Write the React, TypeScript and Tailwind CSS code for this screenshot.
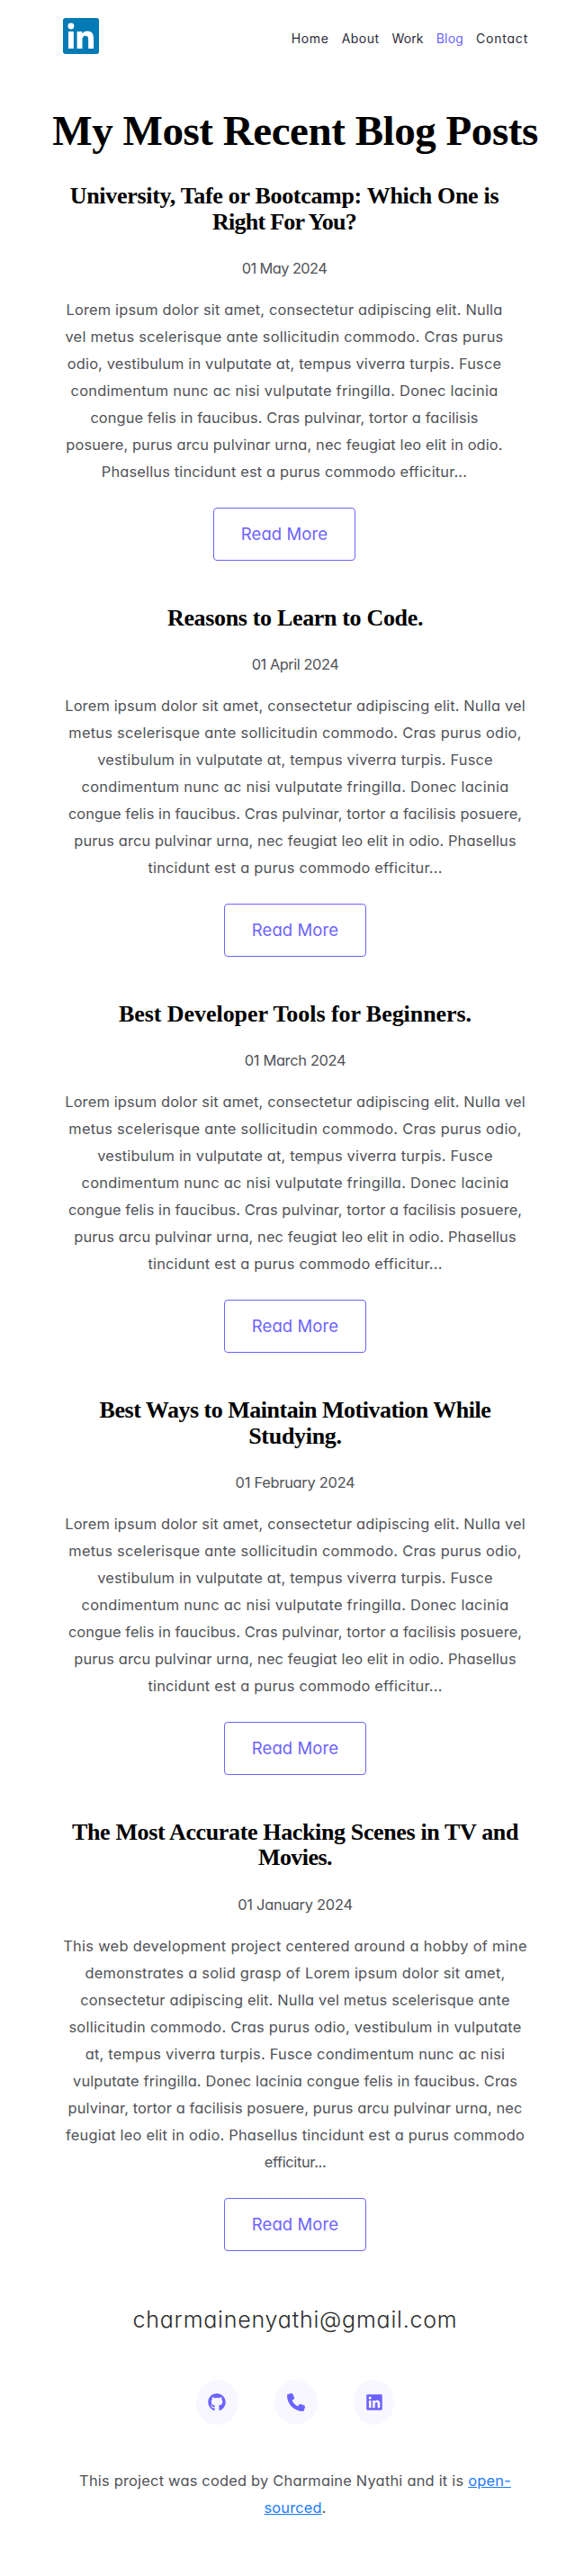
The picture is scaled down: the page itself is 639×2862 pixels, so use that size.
import { FaGithub, FaLinkedin, FaPhone } from "react-icons/fa6";

type Line = [text: string, tracking: string];

interface Post {
  title: Line[];
  date: Line;
  body: Line[];
  narrow?: boolean;
}

const excerpt: Line[] = [
  ["Lorem ipsum dolor sit amet, consectetur adipiscing elit. Nulla vel", "tracking-[0.158px]"],
  ["metus scelerisque ante sollicitudin commodo. Cras purus odio,", "tracking-[0.256px]"],
  ["vestibulum in vulputate at, tempus viverra turpis. Fusce", "tracking-[0.181px]"],
  ["condimentum nunc ac nisi vulputate fringilla. Donec lacinia", "tracking-[0.27px]"],
  ["congue felis in faucibus. Cras pulvinar, tortor a facilisis posuere,", "tracking-[0.08px]"],
  ["purus arcu pulvinar urna, nec feugiat leo elit in odio. Phasellus", "tracking-[0.105px]"],
  ["tincidunt est a purus commodo efficitur...", "tracking-[0.212px]"],
];

const posts: Post[] = [
  {
    narrow: true,
    title: [
      ["University, Tafe or Bootcamp: Which One is", "tracking-[-0.309px]"],
      ["Right For You?", "tracking-[-0.762px]"],
    ],
    date: ["01 May 2024", "tracking-[-0.58px]"],
    body: [
      ["Lorem ipsum dolor sit amet, consectetur adipiscing elit. Nulla", "tracking-[0.173px]"],
      ["vel metus scelerisque ante sollicitudin commodo. Cras purus", "tracking-[0.259px]"],
      ["odio, vestibulum in vulputate at, tempus viverra turpis. Fusce", "tracking-[0.158px]"],
      ["condimentum nunc ac nisi vulputate fringilla. Donec lacinia", "tracking-[0.27px]"],
      ["congue felis in faucibus. Cras pulvinar, tortor a facilisis", "tracking-[0.086px]"],
      ["posuere, purus arcu pulvinar urna, nec feugiat leo elit in odio.", "tracking-[0.117px]"],
      ["Phasellus tincidunt est a purus commodo efficitur...", "tracking-[0.166px]"],
    ],
  },
  {
    title: [["Reasons to Learn to Code.", "tracking-[-0.335px]"]],
    date: ["01 April 2024", "tracking-[-0.46px]"],
    body: excerpt,
  },
  {
    title: [["Best Developer Tools for Beginners.", "tracking-[-0.06px]"]],
    date: ["01 March 2024", "tracking-[-0.32px]"],
    body: excerpt,
  },
  {
    title: [
      ["Best Ways to Maintain Motivation While", "tracking-[-0.489px]"],
      ["Studying.", "tracking-[-0.289px]"],
    ],
    date: ["01 February 2024", "tracking-[-0.26px]"],
    body: excerpt,
  },
  {
    title: [
      ["The Most Accurate Hacking Scenes in TV and", "tracking-[-0.36px]"],
      ["Movies.", "tracking-[-0.532px]"],
    ],
    date: ["01 January 2024", "tracking-[-0.26px]"],
    body: [
      ["This web development project centered around a hobby of mine", "tracking-[0.301px]"],
      ["demonstrates a solid grasp of Lorem ipsum dolor sit amet,", "tracking-[0.249px]"],
      ["consectetur adipiscing elit. Nulla vel metus scelerisque ante", "tracking-[0.189px]"],
      ["sollicitudin commodo. Cras purus odio, vestibulum in vulputate", "tracking-[0.266px]"],
      ["at, tempus viverra turpis. Fusce condimentum nunc ac nisi", "tracking-[0.226px]"],
      ["vulputate fringilla. Donec lacinia congue felis in faucibus. Cras", "tracking-[0.129px]"],
      ["pulvinar, tortor a facilisis posuere, purus arcu pulvinar urna, nec", "tracking-[0.1px]"],
      ["feugiat leo elit in odio. Phasellus tincidunt est a purus commodo", "tracking-[0.219px]"],
      ["efficitur...", "tracking-[-0.34px]"],
    ],
  },
];

const links: Line[] = [
  ["Home", "tracking-[0.65px]"],
  ["About", "tracking-[0.45px]"],
  ["Work", "tracking-[0.1px]"],
  ["Blog", "tracking-[0.12px] text-[#6c63ff]"],
  ["Contact", "tracking-[0.78px]"],
];

const socials = [
  { label: "GitHub", Icon: FaGithub, width: "w-[47px]" },
  { label: "Phone", Icon: FaPhone, width: "w-12" },
  { label: "LinkedIn", Icon: FaLinkedin, width: "w-[45.5px]" },
];

function Lines({ lines }: { lines: Line[] }) {
  return (
    <>
      {lines.map(([text, tracking]) => (
        <span key={text} className={`block ${tracking}`}>
          {text}
        </span>
      ))}
    </>
  );
}

function Logo() {
  return (
    <svg viewBox="0 0 24 24" className="size-10" fill="#007bb6" role="img">
      <path d="M20.447 20.452h-3.554v-5.569c0-1.328-.027-3.037-1.852-3.037-1.853 0-2.136 1.445-2.136 2.939v5.667H9.351V9h3.414v1.561h.046c.477-.9 1.637-1.85 3.37-1.85 3.601 0 4.267 2.37 4.267 5.455v6.286zM5.337 7.433a2.062 2.062 0 0 1-2.063-2.065 2.064 2.064 0 1 1 2.063 2.065zm1.782 13.019H3.555V9h3.564v11.452zM22.5 0H1.5C.7 0 0 .7 0 1.5v21c0 .8.7 1.5 1.5 1.5h21c.8 0 1.5-.7 1.5-1.5v-21c0-.8-.7-1.5-1.5-1.5z" />
    </svg>
  );
}

function PostCard({ post }: { post: Post }) {
  return (
    <article className={`flex flex-col items-center ${post.narrow ? "w-[492px]" : "w-[516px]"}`}>
      <h2 className="font-['Liberation_Serif',serif] text-[26px] leading-[28.8px] font-bold text-black">
        <Lines lines={post.title} />
      </h2>
      <p className="mt-[21.4px]">
        <Lines lines={[post.date]} />
      </p>
      <p className="mt-4">
        <Lines lines={post.body} />
      </p>
      <a
        href="#"
        className="mt-[25px] flex h-[59px] w-[158px] items-center justify-center rounded border border-[#6c63ff] text-[18.5px] tracking-[0.09px] text-[#6c63ff]"
      >
        Read More
      </a>
    </article>
  );
}

export default function App() {
  return (
    <div className="min-h-[2862px] bg-white pl-[70px] text-center font-[Inter,sans-serif] text-[16.4px] leading-[30px] whitespace-nowrap text-[#505257] [font-feature-settings:'cv11']">
      <header className="flex h-20 w-[516px] items-center justify-between">
        <Logo />
        <nav className="-mr-px flex gap-[14.2px] pt-1 text-sm leading-[21px] text-[#2c2b3b]">
          {links.map(([text, style]) => (
            <a key={text} href="#" className={style}>
              {text}
            </a>
          ))}
        </nav>
      </header>

      <main className="pt-9">
        <h1 className="flex w-[516px] justify-center font-['Liberation_Serif',serif] text-[47px] leading-[58px] font-bold tracking-[-0.45px] text-black">
          My Most Recent Blog Posts
        </h1>
        <div className="mt-[30px] flex flex-col gap-[49.8px]">
          {posts.map((post) => (
            <PostCard key={post.date[0]} post={post} />
          ))}
        </div>
      </main>

      <footer className="mt-[58.6px] w-[516px]">
        <p className="text-[25px] leading-9 font-light tracking-[0.79px] text-[#2d2d2d]">
          charmainenyathi@gmail.com
        </p>
        <div className="mt-[49px] flex justify-center gap-10">
          {socials.map(({ label, Icon, width }) => (
            <a
              key={label}
              href="#"
              aria-label={label}
              className={`flex h-[50px] items-center justify-center rounded-[50%] bg-[#f8f7ff] text-[#6c63ff] ${width}`}
            >
              <Icon className="size-5" />
            </a>
          ))}
        </div>
        <p className="mt-[47px]">
          <span className="block tracking-[0.22px]">
            This project was coded by Charmaine Nyathi and it is{" "}
            <a href="#" className="text-[#1a7bff] underline">
              open-
            </a>
          </span>
          <span className="block tracking-[0.14px]">
            <a href="#" className="text-[#1a7bff] underline">
              sourced
            </a>
            .
          </span>
        </p>
      </footer>
    </div>
  );
}
